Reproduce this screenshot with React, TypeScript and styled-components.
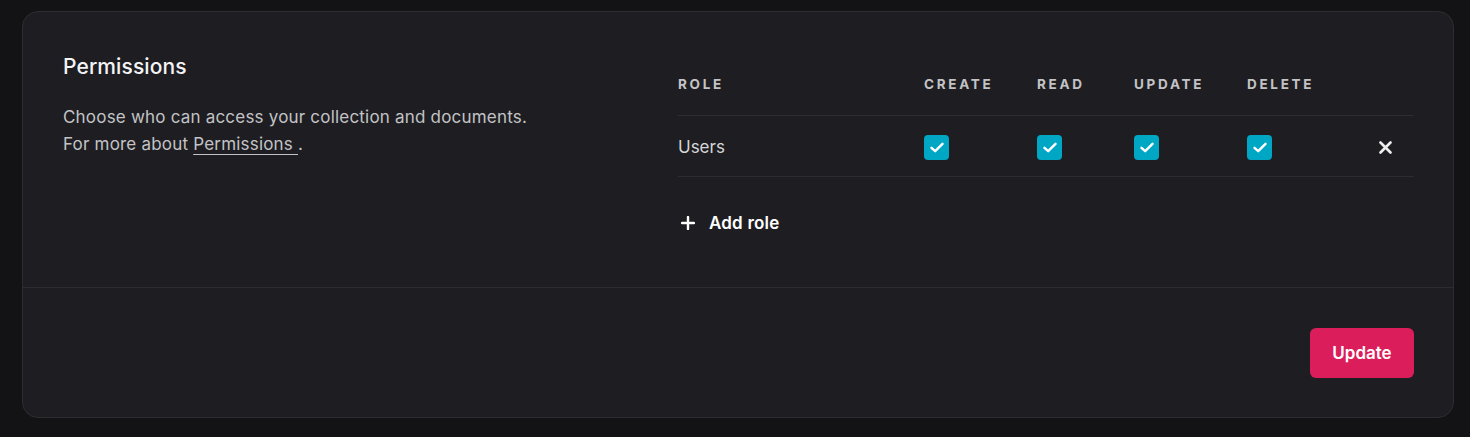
import React from "react";
import styled, { createGlobalStyle } from "styled-components";

const Global = createGlobalStyle`
  html, body { margin: 0; padding: 0; background: #131315; }
  body { font-family: Inter, "Noto Sans", sans-serif; color: #c3c3c6; }
  * { box-sizing: border-box; }
`;

const Page = styled.div`
  padding: 11px 16px 19px 22px;
  min-height: 437px;
`;

const Card = styled.section`
  width: 1432px;
  background: #1e1e22;
  border: 1px solid #2d2d31;
  border-radius: 16px;
`;

const Body = styled.div`
  display: grid;
  grid-template-columns: 575px 1fr;
  column-gap: 40px;
  padding: 40px 39px 39px 40px;
  border-bottom: 1px solid #2d2d31;
`;

const Info = styled.div`
  display: flex;
  flex-direction: column;
  gap: 22px;
`;

const Title = styled.h2`
  margin: 0;
  font-size: 21px;
  line-height: 30px;
  font-weight: 500;
  letter-spacing: 0.1px;
  color: #f4f4f6;
`;

const Desc = styled.p`
  margin: 0;
  font-size: 17px;
  line-height: 27px;
  letter-spacing: 0.2px;
  color: #c3c3c6;
`;

const Link = styled.a`
  color: #c3c3c6;
  text-decoration: underline;
  text-underline-offset: 4px;
`;

const Table = styled.div`
  display: flex;
  flex-direction: column;
`;

const Row = styled.div<{ $head?: boolean }>`
  display: grid;
  grid-template-columns: 246px 113px 97px 113px 1fr 58px;
  align-items: center;
  height: ${(p) => (p.$head ? "64px" : "61px")};
  border-bottom: 1px solid #2d2d31;
`;

const HeadCell = styled.div`
  font-size: 13.5px;
  font-weight: 700;
  letter-spacing: 2.7px;
  color: #c3c3c6;
  padding-top: 1px;
`;

const RoleCell = styled.div`
  font-size: 17px;
  color: #d6d6d9;
  padding-top: 2px;
`;

const Check = styled.span`
  width: 25px;
  height: 25px;
  border-radius: 4px;
  background: #00a7c4;
  display: inline-flex;
  align-items: center;
  justify-content: center;
  margin-top: 2px;
`;

const CheckCell = styled.div`
  display: flex;
  align-items: center;
`;

const Remove = styled.button`
  background: none;
  border: 0;
  padding: 0;
  display: flex;
  justify-content: center;
  align-items: center;
  color: #ededf0;
  cursor: pointer;
  margin-top: 2px;
`;

const AddRole = styled.button`
  background: none;
  border: 0;
  padding: 0 0 0 3px;
  margin-top: 21px;
  height: 50px;
  display: flex;
  align-items: center;
  gap: 14px;
  font-family: inherit;
  font-size: 17px;
  font-weight: 600;
  letter-spacing: 0.2px;
  color: #ffffff;
  cursor: pointer;
`;

const Footer = styled.div`
  display: flex;
  justify-content: flex-end;
  padding: 40px 39px 39px 40px;
`;

const Primary = styled.button`
  height: 50px;
  width: 104px;
  border: 0;
  border-radius: 6px;
  background: #db1d5b;
  color: #ffffff;
  font-family: inherit;
  font-size: 17px;
  font-weight: 600;
  cursor: pointer;
`;

const CheckIcon = () => (
  <svg width="14" height="11" viewBox="0 0 14 11" fill="none">
    <path d="M1.5 5.8L5.2 9.2L12.5 1.8" stroke="#fff" strokeWidth="2.4" strokeLinecap="round" strokeLinejoin="round" />
  </svg>
);

const XIcon = () => (
  <svg width="13" height="13" viewBox="0 0 13 13" fill="none">
    <path d="M1.5 1.5L11.5 11.5M11.5 1.5L1.5 11.5" stroke="currentColor" strokeWidth="2.6" strokeLinecap="round" />
  </svg>
);

const PlusIcon = () => (
  <svg width="14" height="14" viewBox="0 0 14 14" fill="none">
    <path d="M7 1V13M1 7H13" stroke="#fff" strokeWidth="2.4" strokeLinecap="round" />
  </svg>
);

export default function App() {
  const perms = ["create", "read", "update", "delete"];
  return (
    <Page>
      <Global />
      <Card>
        <Body>
          <Info>
            <Title>Permissions</Title>
            <Desc>
              Choose who can access your collection and documents.
              <br />
              For more about <Link href="#">Permissions </Link>.
            </Desc>
          </Info>
          <Table>
            <Row $head>
              <HeadCell>ROLE</HeadCell>
              <HeadCell>CREATE</HeadCell>
              <HeadCell>READ</HeadCell>
              <HeadCell>UPDATE</HeadCell>
              <HeadCell>DELETE</HeadCell>
              <div />
            </Row>
            <Row>
              <RoleCell>Users</RoleCell>
              {perms.map((p) => (
                <CheckCell key={p}>
                  <Check aria-label={p}>
                    <CheckIcon />
                  </Check>
                </CheckCell>
              ))}
              <Remove aria-label="Remove">
                <XIcon />
              </Remove>
            </Row>
            <div>
              <AddRole>
                <PlusIcon />
                Add role
              </AddRole>
            </div>
          </Table>
        </Body>
        <Footer>
          <Primary>Update</Primary>
        </Footer>
      </Card>
    </Page>
  );
}
